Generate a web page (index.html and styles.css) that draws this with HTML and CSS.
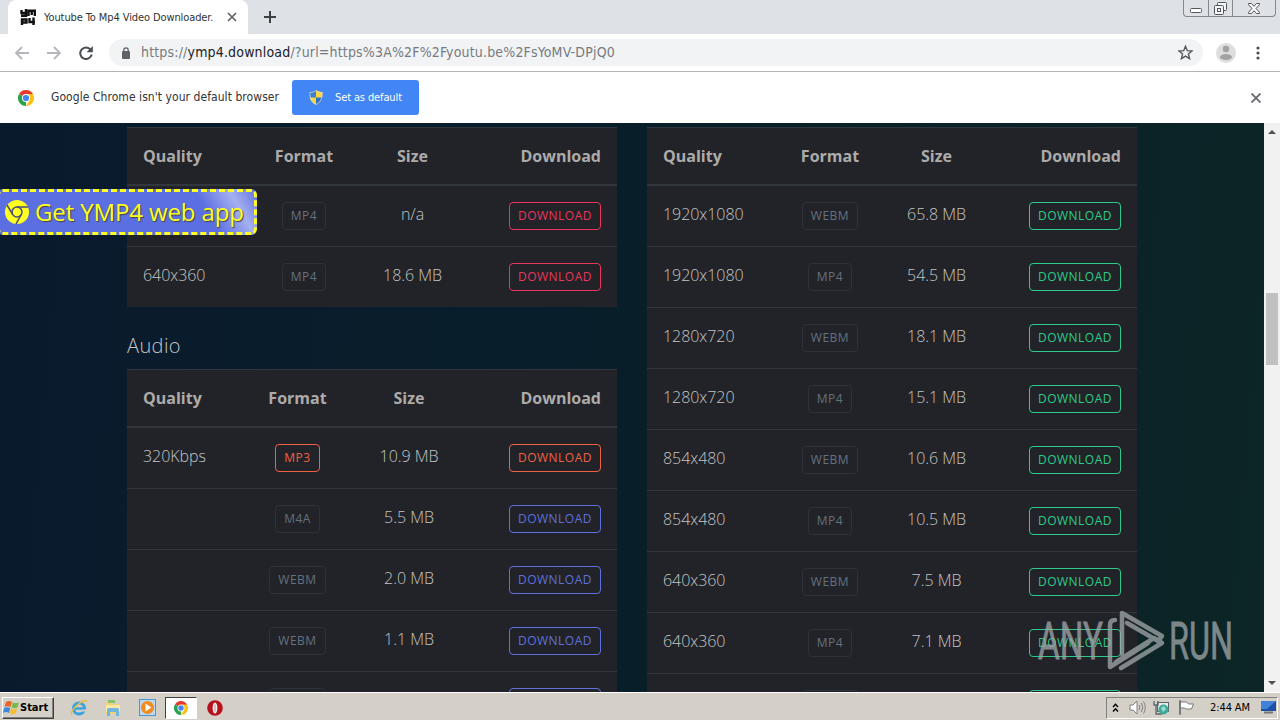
FILE: index.html
```html
<!DOCTYPE html>
<html lang="en">
  <head>
    <meta charset="UTF-8" />
    <title>Youtube To Mp4 Video Downloader</title>
    <link rel="stylesheet" href="styles.css">
  </head>
  <body>
    <div class="tabstrip">
      <div class="tab">
        <svg class="favicon" width="16" height="16" viewBox="0 0 16 16" fill="none" stroke="#111" stroke-width="2.400">
          <path d="M1.500 1v3H6M6 0v6.800H1M8.500 7V1.800h6.300V7M11.700 1v5M2 16v-5.500h4.500v3H2M9.500 9v4H15M13.500 8.500V16" />
        </svg>
        <span class="tab-title">Youtube To Mp4 Video Downloader.</span>
        <svg class="tab-close" width="10" height="10" viewBox="0 0 10 10" stroke="#5f6368" stroke-width="1.700"><path d="M1 1l8 8M9 1l-8 8" /></svg>
      </div>
      <svg class="new-tab" width="12" height="12" viewBox="0 0 12 12" stroke="#3c4043" stroke-width="2"><path d="M6 0v12M0 6h12" /></svg>
      <div class="window-buttons">
        <span class="win-min"><svg width="12" height="5" viewBox="0 0 12 5"><rect x=".5" y=".5" width="11" height="4" rx="1" fill="#fff" stroke="#53565c" /></svg></span>
        <span class="win-max"><svg width="13" height="13" viewBox="0 0 13 13" fill="#f4f5f7" stroke="#53565c"><rect x="3.500" y=".5" width="9" height="8" rx="1" /><rect x=".5" y="3.500" width="9" height="9" rx="1" /><rect x="3.500" y="6.500" width="3" height="3" /></svg></span>
        <span class="win-close"><svg width="12" height="11" viewBox="0 0 12 11"><path d="M.5.5h3L6 3.300 8.500.5h3v1.200L8 5.500l3.500 3.800v1.200h-3L6 7.700 3.500 10.500h-3V9.300L4 5.500.5 1.700z" fill="#f8f8f8" stroke="#53565c" /></svg></span>
      </div>
    </div>

    <div class="toolbar">
      <svg class="nav" width="14" height="14" viewBox="0 0 14 14" fill="none" stroke="#b4b6b9" stroke-width="1.800"><path d="M14 7H1.500M7 1L1 7l6 6" /></svg>
      <svg class="nav" width="14" height="14" viewBox="0 0 14 14" fill="none" stroke="#b4b6b9" stroke-width="1.800"><path d="M0 7h12.500M7 1l6 6-6 6" /></svg>
      <svg class="nav reload" width="14" height="14" viewBox="0 0 14 14"><path d="M11.600 3.600A5.800 5.800 0 1 0 12.700 8.500" fill="none" stroke="#4a4d51" stroke-width="2" /><path d="M13.800 0v6.200H7.600z" fill="#4a4d51" /></svg>
      <div class="omnibox">
        <svg class="lock" width="8" height="12" viewBox="0 0 8 12"><rect y="4" width="8" height="8" rx="1" fill="#5f6368" /><path d="M1.800 5V3a2.200 2.200 0 0 1 4.400 0v2" fill="none" stroke="#5f6368" stroke-width="1.300" /></svg>
        <span class="url">https://<b>ymp4.download</b>/?url=https%3A%2F%2Fyoutu.be%2FsYoMV-DPjQ0</span>
        <svg class="star" width="15" height="15" viewBox="0 0 15 15"><path d="M7.500 1.200l1.800 4.500 4.700.3-3.600 3 1.200 4.700-4.100-2.600-4.100 2.600L4.600 9 1 6l4.700-.3z" fill="none" stroke="#55585d" stroke-width="1.400" /></svg>
      </div>
      <svg class="avatar" width="20" height="20" viewBox="0 0 20 20"><circle cx="10" cy="10" r="10" fill="#dedede" /><circle cx="10" cy="6" r="3.200" fill="#a2a2a2" /><ellipse cx="10" cy="14" rx="6" ry="3" fill="#a2a2a2" /></svg>
      <svg class="kebab" width="4" height="14" viewBox="0 0 4 14" fill="#4a4d51"><circle cx="2" cy="2" r="1.600" /><circle cx="2" cy="7" r="1.600" /><circle cx="2" cy="12" r="1.600" /></svg>
    </div>

    <div class="infobar">
      <svg class="chrome" width="16" height="16" viewBox="0 0 16 16">
        <path d="M8 8L1.070 4A8 8 0 0 1 14.930 4z" fill="#e33b2e" />
        <path d="M8 8L8 16A8 8 0 0 1 1.070 4z" fill="#2ba24c" />
        <path d="M8 4h6.930A8 8 0 0 1 8 16l3.460-6z" fill="#fbc116" />
        <circle cx="8" cy="8" r="4" fill="#fff" /><circle cx="8" cy="8" r="3.100" fill="#4286f5" />
      </svg>
      <span class="infobar-text">Google Chrome isn't your default browser</span>
      <button class="set-default">
        <svg width="14" height="15" viewBox="0 0 14 15">
          <path d="M7 0C5 1.500 3 2 .5 2c0 6 1 10 6.500 13V0z" fill="#3b7fd6" /><path d="M7 0c2 1.500 4 2 6.500 2 0 6-1 10-6.500 13V0z" fill="#f7d640" />
          <path d="M.7 7.500H7V15C3.500 13 1.400 11 .7 7.500z" fill="#f7d640" /><path d="M13.300 7.500H7V15c3.500-2 5.600-4 6.300-7.500z" fill="#2f6fc4" />
          <path d="M7 .6C5 2 3 2.500 .8 2.500 .8 8 2 12 7 14.500c5-2.500 6.200-6.500 6.200-12C11 2.500 9 2 7 .6z" fill="none" stroke="#d8dccb" stroke-width=".8" />
        </svg>
        <span>Set as default</span>
      </button>
      <svg class="infobar-close" width="10" height="10" viewBox="0 0 10 10" stroke="#66696d" stroke-width="1.800"><path d="M.5.500l9 9M9.500.500l-9 9" /></svg>
    </div>

    <div class="viewport">
      <div class="page">
        <div class="column">
          <table class="video">
            <colgroup><col class="c1"><col class="c2"><col class="c3"><col class="c4"></colgroup>
            <thead><tr><th>Quality</th><th>Format</th><th>Size</th><th>Download</th></tr></thead>
            <tbody>
              <tr><td></td><td><span class="btn muted">MP4</span></td><td>n/a</td><td><span class="btn red">DOWNLOAD</span></td></tr>
              <tr><td>640x360</td><td><span class="btn muted">MP4</span></td><td>18.6 MB</td><td><span class="btn red">DOWNLOAD</span></td></tr>
            </tbody>
          </table>
          <h4>Audio</h4>
          <table class="audio">
            <colgroup><col class="c1"><col class="c2"><col class="c3"><col class="c4"></colgroup>
            <thead><tr><th>Quality</th><th>Format</th><th>Size</th><th>Download</th></tr></thead>
            <tbody>
              <tr><td>320Kbps</td><td><span class="btn orange">MP3</span></td><td>10.9 MB</td><td><span class="btn orange">DOWNLOAD</span></td></tr>
              <tr><td></td><td><span class="btn muted">M4A</span></td><td>5.5 MB</td><td><span class="btn blue">DOWNLOAD</span></td></tr>
              <tr><td></td><td><span class="btn muted">WEBM</span></td><td>2.0 MB</td><td><span class="btn blue">DOWNLOAD</span></td></tr>
              <tr><td></td><td><span class="btn muted">WEBM</span></td><td>1.1 MB</td><td><span class="btn blue">DOWNLOAD</span></td></tr>
              <tr><td></td><td><span class="btn muted wide"></span></td><td></td><td><span class="btn blue full"></span></td></tr>
            </tbody>
          </table>
        </div>
        <div class="column">
          <table class="silent">
            <colgroup><col class="c1"><col class="c2"><col class="c3"><col class="c4"></colgroup>
            <thead><tr><th>Quality</th><th>Format</th><th>Size</th><th>Download</th></tr></thead>
            <tbody>
              <tr><td>1920x1080</td><td><span class="btn muted">WEBM</span></td><td>65.8 MB</td><td><span class="btn green">DOWNLOAD</span></td></tr>
              <tr><td>1920x1080</td><td><span class="btn muted">MP4</span></td><td>54.5 MB</td><td><span class="btn green">DOWNLOAD</span></td></tr>
              <tr><td>1280x720</td><td><span class="btn muted">WEBM</span></td><td>18.1 MB</td><td><span class="btn green">DOWNLOAD</span></td></tr>
              <tr><td>1280x720</td><td><span class="btn muted">MP4</span></td><td>15.1 MB</td><td><span class="btn green">DOWNLOAD</span></td></tr>
              <tr><td>854x480</td><td><span class="btn muted">WEBM</span></td><td>10.6 MB</td><td><span class="btn green">DOWNLOAD</span></td></tr>
              <tr><td>854x480</td><td><span class="btn muted">MP4</span></td><td>10.5 MB</td><td><span class="btn green">DOWNLOAD</span></td></tr>
              <tr><td>640x360</td><td><span class="btn muted">WEBM</span></td><td>7.5 MB</td><td><span class="btn green">DOWNLOAD</span></td></tr>
              <tr><td>640x360</td><td><span class="btn muted">MP4</span></td><td>7.1 MB</td><td><span class="btn green">DOWNLOAD</span></td></tr>
              <tr><td></td><td><span class="btn muted wide"></span></td><td></td><td><span class="btn green full"></span></td></tr>
            </tbody>
          </table>
        </div>
      </div>

      <div class="web-app">
        <svg width="24" height="24" viewBox="0 0 24 24">
          <circle cx="12" cy="12" r="12" fill="#ffff22" />
          <g fill="none" stroke="#4a4f76" stroke-width="1.500"><circle cx="12" cy="12" r="5" /><path d="M12 7h11M7.700 14.500L2 5M16.300 14.500L11 24" /></g>
        </svg>
        <span>Get YMP4 web app</span>
      </div>

      <div class="scrollbar">
        <i class="arrow up"></i>
        <div class="thumb"></div>
        <i class="arrow down"></i>
      </div>

      <svg class="watermark" width="200" height="70" viewBox="0 0 200 70">
        <text x="2" y="53" textLength="65" lengthAdjust="spacingAndGlyphs">ANY</text>
        <g fill="none" stroke="#a2a9ac" stroke-width="4.500" stroke-linejoin="round" stroke-linecap="round">
          <path d="M86 48V7l40 23-4 5-31-18" />
          <path d="M79 14q-5 0-5 5v42l38-24" />
          <path d="M85 62l41-25-8-5-38 24" />
        </g>
        <text x="133" y="53" textLength="64" lengthAdjust="spacingAndGlyphs">RUN</text>
      </svg>
    </div>

    <div class="taskbar">
      <div class="start">
        <svg width="17" height="16" viewBox="0 0 17 16">
          <path d="M3 2q3-2 6 0L7.500 7q-3-1.500-6 0z" fill="#e8662a" /><path d="M9.800 2.500q3 1.500 6 0L14.500 7.500q-3 1.500-6 0z" fill="#79b84a" />
          <path d="M1.200 8q3-1.500 6 0L6 13q-3-2-6 0z" fill="#3f87d8" /><path d="M8 8.500q3 1.500 6 0L12.800 13.500q-3 1.500-6 0z" fill="#f6bd31" />
        </svg>
        <span>Start</span>
      </div>
      <div class="launch">
        <svg width="18" height="18" viewBox="0 0 18 18"><circle cx="9" cy="9.500" r="5.500" fill="none" stroke="#38a3e2" stroke-width="3" /><path d="M5 9.500h9" stroke="#38a3e2" stroke-width="2.500" /><path d="M12 11.500h5" stroke="#d4d0c8" stroke-width="2" /><path d="M2 16C-1 12 12 0 17 2" fill="none" stroke="#edbd3b" stroke-width="1.400" /></svg>
      </div>
      <div class="launch">
        <svg width="18" height="18" viewBox="0 0 18 18"><path d="M2 3h5l1 2h7v10H2z" fill="#f0d375" /><path d="M4 1h7v3H4z" fill="#86c36c" /><path d="M2 6h14v7H2z" fill="#f9e8a5" /><path d="M3 17v-6q0-2 2-2h8q2 0 2 2v6h-3v-4H6v4z" fill="#71b6dc" /></svg>
      </div>
      <div class="launch">
        <svg width="17" height="17" viewBox="0 0 17 17"><rect x=".5" y=".5" width="16" height="16" fill="#b9d8f1" stroke="#4d95cf" /><circle cx="8.500" cy="8.500" r="6.500" fill="#f28b1b" /><path d="M6.500 4.500v8l6-4z" fill="#fff" /></svg>
      </div>
      <div class="launch active">
        <svg width="14" height="14" viewBox="0 0 16 16">
          <path d="M8 8L1.070 4A8 8 0 0 1 14.930 4z" fill="#e33b2e" />
          <path d="M8 8L8 16A8 8 0 0 1 1.070 4z" fill="#2ba24c" />
          <path d="M8 4h6.930A8 8 0 0 1 8 16l3.460-6z" fill="#fbc116" />
          <circle cx="8" cy="8" r="4" fill="#fff" /><circle cx="8" cy="8" r="3.100" fill="#4286f5" />
        </svg>
      </div>
      <div class="launch">
        <svg width="16" height="16" viewBox="0 0 16 16"><circle cx="8" cy="8" r="7.800" fill="#b5121b" /><ellipse cx="8" cy="8" rx="2.400" ry="5.500" fill="#f3eeee" /><path d="M8 4.500v7" stroke="#c98a8d" stroke-width="1" /></svg>
      </div>
      <div class="tray">
        <svg width="7" height="10" viewBox="0 0 7 10" fill="none" stroke="#000" stroke-width="1.400"><path d="M1 4l2.500-2.800L6 4M1 8.500l2.500-2.800L6 8.500" /></svg>
        <svg class="volume" width="17" height="15" viewBox="0 0 17 15" fill="none" stroke="#808080"><path d="M1 5h3l4-4v13l-4-4H1z" fill="#fff" /><path d="M10 5q1.500 2.500 0 5M12.300 3q3 4.500 0 9M14.500 1.500q3.500 6 0 12" /></svg>
        <svg class="network" width="17" height="15" viewBox="0 0 17 15"><rect x="4.500" y="2.500" width="11" height="9" fill="#e8eced" stroke="#5c6468" /><path d="M1 1v4h4V1M3 5v9h6" fill="none" stroke="#5c6468" stroke-width="1.300" /><circle cx="10.500" cy="9.500" r="5" fill="#42a99a" /><path d="M8 8l3-2 2 3-3 3z" fill="#99dfcf" /></svg>
        <svg class="flag" width="17" height="15" viewBox="0 0 17 15" fill="#fff" stroke="#77797a"><path d="M1.500.5h1v14h-1zM2.500 2h6l2 2h5l-2 5H8L6.500 8h-4z" /></svg>
        <span class="clock">2:44 AM</span>
        <svg class="desktop" width="15" height="13" viewBox="0 0 15 13"><rect width="15" height="10" fill="#1d4fa5" /><path d="M0 0h15L6 8H0z" fill="#4083d6" /><path d="M3 11.500h9" stroke="#777" stroke-width="2" /></svg>
      </div>
    </div>
  </body>
</html>
```

FILE: styles.css
```css
* {
  box-sizing: border-box;
}
body {
  display: flex;
  flex-direction: column;
  width: 1280px;
  height: 720px;
  margin: 0;
  overflow: hidden;
  background: #fff;
  font-family: "DejaVu Sans Condensed", "DejaVu Sans", sans-serif;
  font-size: 11px;
}
svg {
  display: block;
  flex-shrink: 0;
}

/* browser window */
.tabstrip {
  display: flex;
  height: 34px;
  padding-left: 8px;
  background: #dee1e6;
}
.tab {
  display: flex;
  align-items: center;
  width: 240px;
  padding: 0 11px 0 12px;
  background: #fff;
  border-radius: 8px 8px 0 0;
}
.tab-title {
  width: 172px;
  margin-left: 8px;
  margin-right: auto;
  color: #333;
  white-space: nowrap;
  letter-spacing: -0.1px;
}
.new-tab {
  margin: 11px 0 0 16px;
}
.window-buttons {
  display: flex;
  height: 17px;
  margin-left: auto;
  margin-right: 4px;
  border: 1px solid #85888e;
  border-top: none;
  border-radius: 0 0 4px 4px;
}
.window-buttons span {
  display: flex;
  justify-content: center;
  align-items: center;
  width: 25px;
}
.window-buttons .win-min {
  width: 24px;
  padding-top: 5px;
}
.window-buttons .win-max {
  border: solid #85888e;
  border-width: 0 1px;
}
.window-buttons .win-close {
  width: 42px;
}
.toolbar {
  display: flex;
  align-items: center;
  height: 38px;
  padding-left: 15px;
  border-bottom: 1px solid #b5b5b5;
}
.nav {
  margin-right: 18px;
}
.reload {
  margin-right: 16px;
}
.omnibox {
  display: flex;
  align-items: center;
  width: 1094px;
  height: 27px;
  padding: 0 10px 0 13px;
  background: #f1f3f4;
  border-radius: 14px;
}
.url {
  margin-left: 11px;
  padding-bottom: 2px;
  color: #777b80;
  font-size: 14px;
  letter-spacing: 0.17px;
}
.url b {
  color: #202124;
  font-weight: normal;
}
.star {
  margin-left: auto;
}
.avatar {
  margin-left: 13px;
}
.kebab {
  margin-left: 20px;
}
.infobar {
  display: flex;
  align-items: center;
  height: 51px;
  padding: 0 19px 0 18px;
}
.infobar-text {
  width: 241px;
  margin-left: 17px;
  padding-bottom: 2px;
  color: #333;
  font-size: 12px;
  letter-spacing: 0.06px;
  white-space: nowrap;
}
.set-default {
  display: flex;
  align-items: center;
  width: 127px;
  height: 35px;
  padding: 0 0 0 17px;
  border: none;
  border-radius: 3px;
  background: #4285f4;
  color: #fff;
  font-family: inherit;
  font-size: 11px;
  letter-spacing: -0.12px;
}
.set-default span {
  margin-left: 12px;
  white-space: nowrap;
}
.infobar-close {
  margin-left: auto;
}

/* page */
.viewport {
  position: relative;
  display: flex;
  height: 569px;
  overflow: hidden;
  background: linear-gradient(95deg, #0a1a2d 0%, #081f2a 50%, #0c2525 100%);
  color: #c4c4c4;
  font-family: "Open Sans", sans-serif;
  font-size: 16px;
  font-weight: 300;
  line-height: 24px;
}
.page {
  display: flex;
  gap: 30px;
  padding: 4px 0 0 127px;
}
.column {
  width: 490px;
}
table {
  width: 490px;
  table-layout: fixed;
  border-collapse: separate;
  border-spacing: 0;
  background: #212328;
}
th,
td {
  padding: 16px 0;
  border-top: 1px solid #32373d;
  text-align: center;
  vertical-align: top;
}
th {
  height: 59px;
  border-bottom: 2px solid #32373d;
  color: #adabaa;
  font-weight: 700;
}
td {
  height: 61px;
  letter-spacing: -0.05px;
}
tbody tr:first-child td {
  height: 60px;
  border-top: none;
}
th:first-child,
td:first-child {
  padding-left: 16px;
  text-align: left;
}
th:last-child,
td:last-child {
  padding-right: 16px;
  text-align: right;
}
.video .c1 { width: 123px; }
.video .c2 { width: 108px; }
.video .c3 { width: 109px; }
.audio .c1 { width: 115px; }
.audio .c2 { width: 111px; }
.audio .c3 { width: 112px; }
.silent .c1 { width: 130px; }
.silent .c2 { width: 106px; }
.silent .c3 { width: 107px; }
h4 {
  margin: 23px 0 8px;
  font-size: 20px;
  font-weight: 300;
  line-height: 31px;
  letter-spacing: 0.4px;
}
.btn {
  display: inline-block;
  height: 28px;
  padding: 0 8px;
  border: 1px solid;
  border-radius: 4px;
  font-size: 12px;
  font-weight: 400;
  line-height: 26px;
  letter-spacing: 0.5px;
  vertical-align: top;
}
.wide {
  width: 57px;
}
.full {
  width: 92px;
}
.muted {
  border-color: #2e3137;
  color: #66717f;
}
.red { color: #e8365d; }
.orange { color: #ee6244; }
.blue { color: #5f70dc; }
.green { color: #2dcb8a; }

.muted.btn {
  border-color: #2e3137;
}

.web-app {
  position: absolute;
  left: -3px;
  top: 66px;
  display: flex;
  align-items: center;
  width: 260px;
  height: 46px;
  padding-left: 5px;
  border: 3px dashed #ffff22;
  border-radius: 6px;
  background: linear-gradient(60deg, transparent 78%, rgba(255, 255, 255, 0.45) 90%, rgba(255, 255, 255, 0.1) 98%), #5b6fe2;
  background-origin: border-box;
  color: #ffff22;
  font-size: 24px;
  font-weight: 400;
  letter-spacing: -0.12px;
  text-shadow: 1px 1px 1px #444;
}
.web-app span {
  margin-left: 6px;
  white-space: nowrap;
}
.scrollbar {
  display: flex;
  flex-direction: column;
  align-items: center;
  width: 16px;
  margin-left: auto;
  padding: 7px 0;
  background: #f1f1f1;
}
.thumb {
  width: 12px;
  height: 72px;
  margin: 159px 0 auto;
  background: #c1c1c1;
}
.arrow {
  border: 4px solid transparent;
}
.up {
  border-top: none;
  border-bottom-color: #505050;
}
.down {
  border-bottom: none;
  border-top-color: #505050;
}
.watermark {
  position: absolute;
  left: 1036px;
  top: 483px;
  opacity: 0.75;
}
.watermark text {
  fill: #a2a9ac;
  stroke: #a2a9ac;
  stroke-width: 0.8px;
  font-family: Roboto, sans-serif;
  font-size: 52px;
  font-weight: 400;
}

/* taskbar */
.taskbar {
  display: flex;
  align-items: center;
  height: 28px;
  padding: 2px 2px 0;
  border-top: 1px solid #fff;
  background: #d4d0c8;
}
.start {
  display: flex;
  align-items: center;
  width: 52px;
  height: 22px;
  margin-right: 8px;
  border: 1px solid;
  border-color: #fff #404040 #404040 #fff;
  box-shadow: inset -1px -1px #808080;
  color: #000;
  font-weight: bold;
}
.start span {
  margin-bottom: 1px;
}
.launch {
  display: flex;
  justify-content: center;
  align-items: center;
  width: 34px;
  height: 22px;
}
.launch.active {
  width: 32px;
  margin: 0 1px;
  border: 1px solid;
  border-color: #404040 #fff #fff #404040;
  background: #fff;
}
.tray {
  display: flex;
  align-items: center;
  width: 172px;
  height: 22px;
  margin-left: auto;
  padding-left: 5px;
  border: 1px solid;
  border-color: #808080 #fff #fff #808080;
}
.volume {
  margin-left: 10px;
}
.network {
  margin-left: 7px;
}
.flag {
  margin-left: 8px;
}
.clock {
  width: 42px;
  margin-left: 15px;
  color: #000;
  letter-spacing: -0.1px;
  white-space: nowrap;
}
.desktop {
  margin-left: 9px;
}
```
